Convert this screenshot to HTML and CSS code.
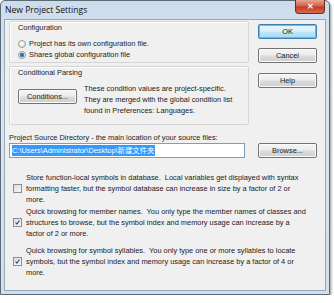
FILE: index.html
```html
<!DOCTYPE html>
<html lang="en">
  <head>
    <meta charset="UTF-8" />
    <title>New Project Settings</title>
    <link rel="stylesheet" href="styles.css">
  </head>
  <body>
    <div class="window">
      <div class="titlebar">
        <span class="title">New Project Settings</span>
        <span class="close">&#x2715;</span>
      </div>

      <div class="client">
        <div class="top-row">
          <div class="groups">
            <div class="group config">
              <div class="group-label">Configuration</div>
              <label class="radio"><span class="dot"></span>Project has its own configuration file.</label>
              <label class="radio"><span class="dot checked"></span>Shares global configuration file</label>
            </div>
            <div class="group parsing">
              <div class="group-label">Conditional Parsing</div>
              <div class="parsing-row">
                <button class="btn cond-btn">Conditions...</button>
                <p class="parsing-text">These condition values are project-specific.<br>They are merged with the global condition list<br>found in Preferences: Languages.</p>
              </div>
            </div>
          </div>
          <div class="side-buttons">
            <button class="btn default">OK</button>
            <button class="btn">Cancel</button>
            <button class="btn help">Help</button>
          </div>
        </div>

        <div class="dir-label">Project Source Directory - the main location of your source files:</div>
        <div class="dir-row">
          <div class="dir-input"><span class="sel">C:\Users\Administrator\Desktop\新建文件夹</span></div>
          <button class="btn browse">Browse...</button>
        </div>

        <div class="option first">
          <span class="check"></span>
          <p>Store function-local symbols in database.&nbsp; Local variables get displayed with syntax<br>formatting faster, but the symbol database can increase in size by a factor of 2 or<br>more.</p>
        </div>
        <div class="option second">
          <span class="check">
            <svg width="9" height="9" viewBox="0 0 9 9"><path d="M2 4.5 L3.8 6.5 L7 2" fill="none" stroke="#21409a" stroke-width="1.4"/></svg>
          </span>
          <p>Quick browsing for member names.&nbsp; You only type the member names of classes and<br>structures to browse, but the symbol index and memory usage can increase by a<br>factor of 2 or more.</p>
        </div>
        <div class="option last">
          <span class="check">
            <svg width="9" height="9" viewBox="0 0 9 9"><path d="M2 4.5 L3.8 6.5 L7 2" fill="none" stroke="#21409a" stroke-width="1.4"/></svg>
          </span>
          <p>Quick browsing for symbol syllables.&nbsp; You only type one or more syllables to locate<br>symbols, but the symbol index and memory usage can increase by a factor of 4 or<br>more.</p>
        </div>
      </div>
    </div>
  </body>
</html>
```

FILE: styles.css
```css
* {
  margin: 0;
  padding: 0;
  box-sizing: border-box;
}

body {
  background-color: #ffffff;
  font-family: "Liberation Sans", Arial, sans-serif;
  font-size: 7.4px;
  color: #1a1a1a;
}

.window {
  width: 330px;
  height: 295px;
  border: 1px solid #5d6b79;
  border-radius: 5px 5px 0 0;
  background: linear-gradient(180deg, #cddceb 0%, #dbe6f1 30%, #d2dfec 100%);
  padding: 0 3px 3px 3px;
  box-shadow: 1px 2px 3px rgba(0, 0, 0, 0.45);
  display: flex;
  flex-direction: column;
}

.titlebar {
  height: 18px;
  display: flex;
  justify-content: space-between;
  align-items: flex-start;
}

.title {
  font-family: "Open Sans", "DejaVu Sans", sans-serif;
  font-size: 8.6px;
  color: #111;
  padding: 3px 0 0 1px;
}

.close {
  width: 30px;
  height: 14px;
  margin: -1px 1px 0 0;
  border: 1px solid #6e2a22;
  border-top: none;
  border-radius: 0 0 4px 4px;
  background: linear-gradient(180deg, #e8a593 0%, #d2604a 45%, #c33a22 55%, #d86a4e 100%);
  color: #ffffff;
  font-size: 8px;
  font-weight: bold;
  display: flex;
  align-items: center;
  justify-content: center;
}

.client {
  flex: 1;
  background-color: #f0f0f0;
  border: 1px solid #98a8b8;
  padding: 1px 4px 0 4px;
}

.top-row {
  display: flex;
  justify-content: space-between;
}

.groups {
  width: 240px;
  display: flex;
  flex-direction: column;
  gap: 3px;
}

.group {
  border: 1px solid #d5d5d5;
  border-radius: 2px;
  box-shadow: inset 1px 1px 0 #ffffff;
  padding: 1px 8px 0 8px;
}

.group.config {
  height: 42px;
}

.group.parsing {
  height: 59px;
}

.group-label {
  line-height: 9px;
  margin-bottom: 6px;
}

.radio {
  display: flex;
  align-items: center;
  line-height: 11px;
}

.dot {
  width: 8px;
  height: 8px;
  border-radius: 50%;
  border: 1px solid #9a9a9a;
  background: radial-gradient(circle at 40% 40%, #ffffff, #d6d6d6);
  margin-right: 3px;
}

.dot.checked {
  background: radial-gradient(circle, #2a5a8c 0, #4a82b8 2px, #e8eef4 2.6px);
}

.parsing-row {
  display: flex;
  gap: 7px;
  margin-top: 4px;
}

.cond-btn {
  width: 59px;
  margin-top: 6px;
}

.parsing-text {
  line-height: 11px;
}

.btn {
  height: 15px;
  font-family: "Liberation Sans", Arial, sans-serif;
  font-size: 7.4px;
  color: #1a1a1a;
  border: 1px solid #737373;
  border-radius: 2px;
  background: linear-gradient(180deg, #f5f5f5 0%, #ececec 48%, #dcdcdc 52%, #cfcfcf 100%);
  box-shadow: inset 0 0 0 1px #fbfbfb;
}

.btn.default {
  border-color: #3c7fb1;
  background: linear-gradient(180deg, #eaf6fd 0%, #d9f0fc 48%, #bee6fd 52%, #a7d9f5 100%);
  box-shadow: inset 0 0 0 1px #56c3ee;
}

.side-buttons {
  width: 59px;
  margin-right: 4px;
  padding-top: 3px;
  display: flex;
  flex-direction: column;
  gap: 9px;
}

.side-buttons .help {
  margin-top: 1px;
}

.dir-label {
  margin-top: 7px;
  line-height: 11px;
}

.dir-row {
  display: flex;
  justify-content: space-between;
  align-items: center;
}

.dir-input {
  width: 236px;
  height: 15px;
  border: 1px solid #7f9db9;
  background: #ffffff;
  padding: 1px 2px;
  display: flex;
  align-items: center;
}

.sel {
  background-color: #3399ff;
  color: #ffffff;
  font-family: "Liberation Sans", "Noto Sans CJK SC", sans-serif;
  line-height: 11px;
}

.browse {
  width: 59px;
  margin-right: 4px;
}

.option {
  display: flex;
  align-items: center;
}

.option.first {
  margin-top: 14px;
}

.option.second {
  margin-top: 1px;
}

.option.last {
  margin-top: 6px;
}

.option p {
  line-height: 11px;
}

.check {
  width: 9px;
  height: 9px;
  flex: none;
  border: 1px solid #8f8f8f;
  background: linear-gradient(135deg, #dcdcdc, #f8f8f8);
  margin: 0 4px 0 4px;
  display: flex;
  align-items: center;
  justify-content: center;
}

.check svg {
  display: block;
}
```
